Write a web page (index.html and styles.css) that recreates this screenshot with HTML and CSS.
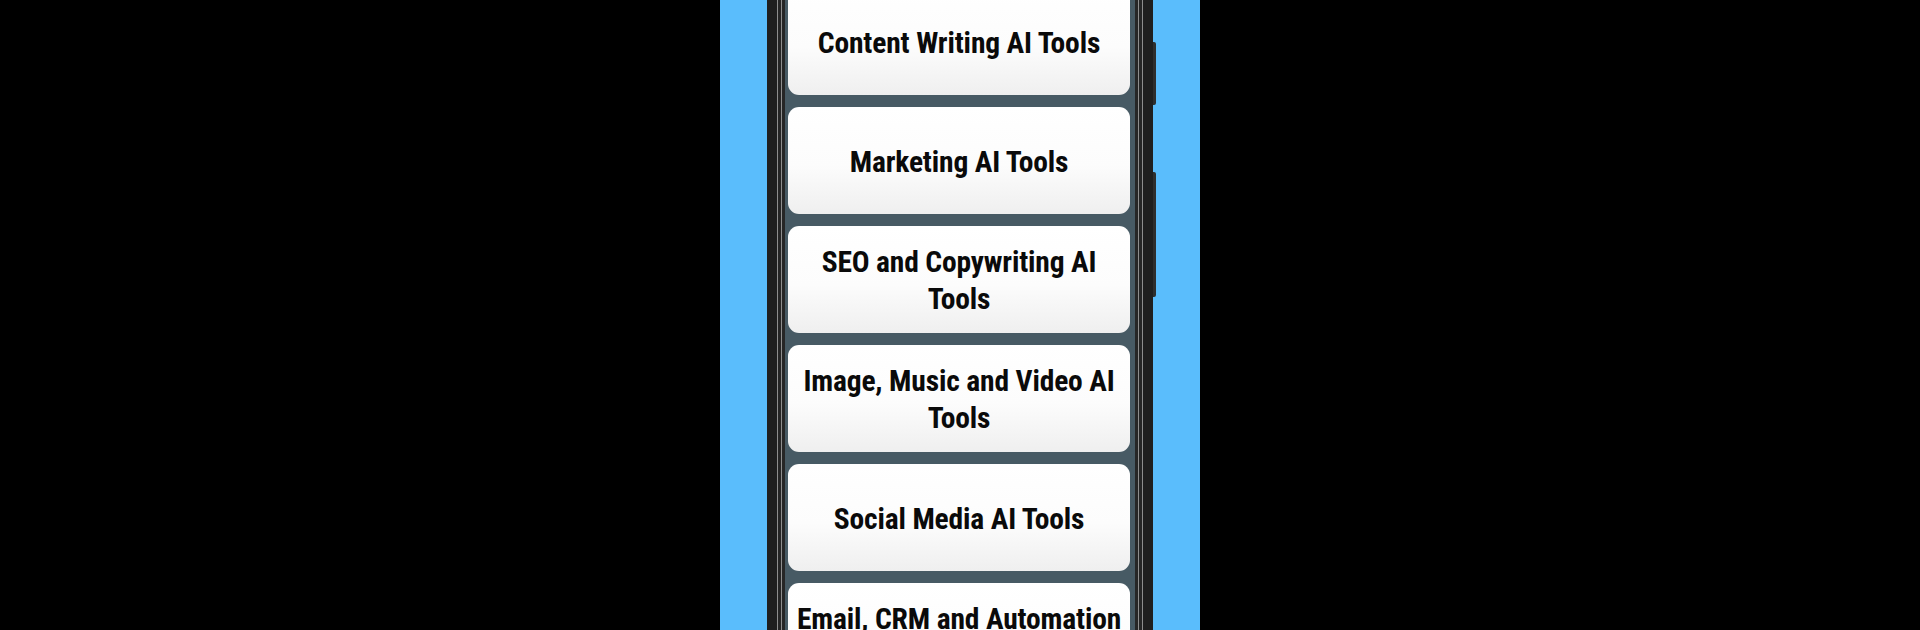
FILE: index.html
```html
<!DOCTYPE html>
<html>
<head>
<meta charset="utf-8">
<link rel="stylesheet" href="styles.css">
</head>
<body>
<div class="stage">
  <div class="panel">
    <div class="phone">
      <div class="screen">
        <div class="list">
          <div class="card"><span>Content Writing AI Tools</span></div>
          <div class="card"><span>Marketing AI Tools</span></div>
          <div class="card"><span>SEO and Copywriting AI Tools</span></div>
          <div class="card"><span>Image, Music and Video AI Tools</span></div>
          <div class="card"><span>Social Media AI Tools</span></div>
          <div class="card"><span>Email, CRM and Automation AI Tools</span></div>
        </div>
      </div>
      <div class="btn btn-power"></div>
      <div class="btn btn-volume"></div>
    </div>
  </div>
</div>
</body>
</html>
```

FILE: styles.css
```css
html, body {
  margin: 0;
  padding: 0;
  background: #000;
  height: 630px;
  overflow: hidden;
}

.stage {
  display: flex;
  justify-content: center;
  height: 630px;
}

.panel {
  width: 480px;
  height: 630px;
  background: #5abdfc;
  overflow: hidden;
  display: flex;
  justify-content: flex-start;
}

.phone {
  position: relative;
  margin-left: 65px;
  margin-top: -40px;
  width: 350px;
  height: 720px;
}

.screen {
  width: 350px;
  height: 720px;
  background: #475a64;
  overflow: hidden;
  box-shadow:
    0 0 0 3px #262626,
    0 0 0 4px #8e8e8e,
    0 0 0 7px #262626,
    0 0 0 8px #8e8e8e,
    0 0 0 18px #1f1f1f;
  box-sizing: border-box;
  padding: 28px 5px 0 3px;
}

.list {
  display: flex;
  flex-direction: column;
  gap: 12px;
}

.card {
  height: 107px;
  border-radius: 11px;
  background: linear-gradient(#ffffff 0%, #fcfcfc 55%, #efefef 100%);
  display: flex;
  align-items: center;
  justify-content: center;
  text-align: center;
  padding: 3px 4px 0;
  box-sizing: border-box;
}

.card span {
  font-family: "Roboto Condensed", Roboto, "Liberation Sans Narrow", sans-serif;
  font-stretch: 80%;
  font-weight: 700;
  font-size: 29.5px;
  line-height: 37px;
  color: #0a0a0a;
  letter-spacing: -0.15px;
}

.btn {
  position: absolute;
  right: -21px;
  width: 3px;
  background: #2e2e2e;
  border-radius: 0 2px 2px 0;
}

.btn-power {
  top: 82px;
  height: 63px;
}

.btn-volume {
  top: 212px;
  height: 125px;
}
```
